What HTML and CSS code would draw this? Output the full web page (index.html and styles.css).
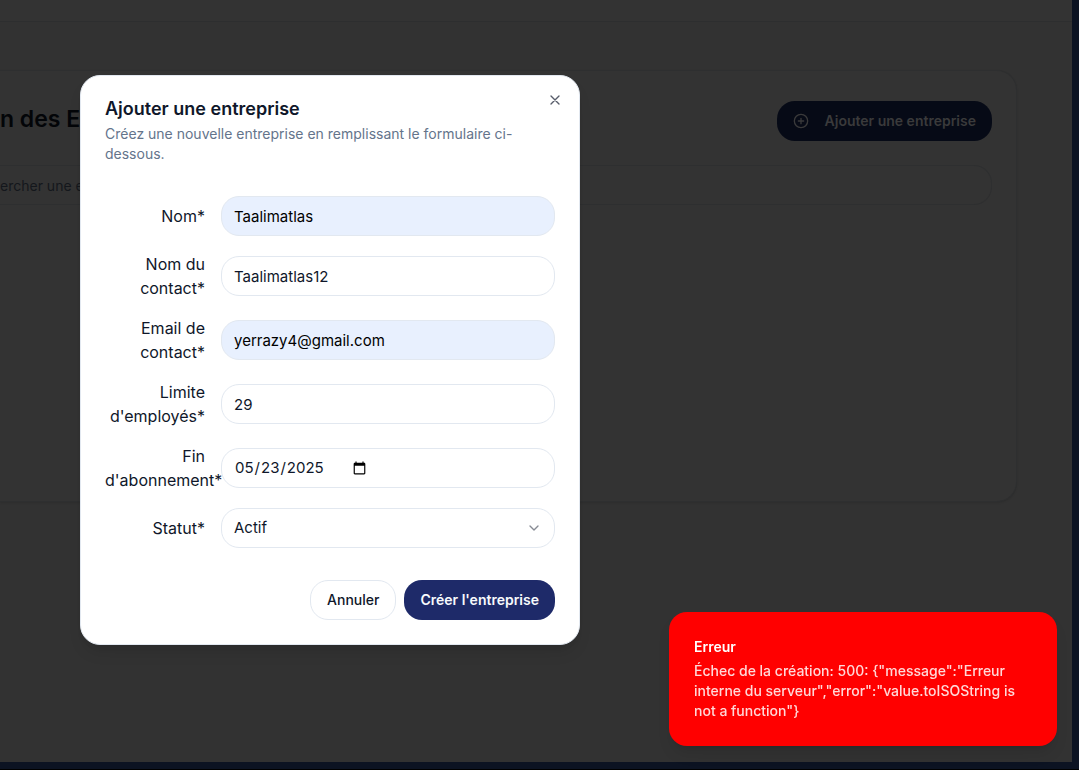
FILE: index.html
```html
<!DOCTYPE html>
<html lang="fr">
<head>
<meta charset="utf-8">
<meta name="viewport" content="width=device-width, initial-scale=1">
<title>Ajouter une entreprise</title>
<link rel="stylesheet" href="styles.css">
</head>
<body>
<div class="frame">
  <div class="app">
    <header class="topbar"></header>
    <main class="content">
      <section class="card">
        <div class="card-head">
          <h1 class="card-title">n des En</h1>
          <button class="btn btn-add" type="button">
            <svg class="icon" viewBox="0 0 24 24" aria-hidden="true"><circle cx="12" cy="12" r="10"/><path d="M8 12h8M12 8v8"/></svg>
            Ajouter une entreprise
          </button>
        </div>
        <input class="search" type="search" placeholder="ercher une en" aria-label="Rechercher">
      </section>
    </main>
  </div>
</div>

<div class="dialog" role="dialog" aria-labelledby="dialog-title">
  <button class="close" type="button" aria-label="Fermer">
    <svg class="icon" viewBox="0 0 24 24" aria-hidden="true"><path d="M18 6 6 18M6 6l12 12"/></svg>
  </button>
  <div class="dialog-head">
    <h2 class="dialog-title" id="dialog-title">Ajouter une entreprise</h2>
    <p class="dialog-text">Créez une nouvelle entreprise en remplissant le formulaire ci-dessous.</p>
  </div>
  <form class="form">
    <div class="fields">
      <div class="row"><label class="label" for="nom">Nom*</label><input class="field filled" id="nom" type="text" value="Taalimatlas"></div>
      <div class="row"><label class="label" for="contact">Nom du contact*</label><input class="field" id="contact" type="text" value="Taalimatlas12"></div>
      <div class="row"><label class="label" for="email">Email de contact*</label><input class="field filled" id="email" type="email" value="yerrazy4@gmail.com"></div>
      <div class="row"><label class="label" for="limite">Limite d'employés*</label><input class="field" id="limite" type="number" value="29"></div>
      <div class="row"><label class="label" for="fin">Fin d'abonnement*</label><input class="field" id="fin" type="date" value="2025-05-23"></div>
      <div class="row">
        <label class="label" for="statut">Statut*</label>
        <div class="select-wrap">
          <select class="field" id="statut"><option>Actif</option></select>
          <svg class="icon chevron" viewBox="0 0 24 24" aria-hidden="true"><path d="m6 9 6 6 6-6"/></svg>
        </div>
      </div>
    </div>
    <div class="actions">
      <button class="btn btn-outline" type="button">Annuler</button>
      <button class="btn btn-primary" type="button">Créer l'entreprise</button>
    </div>
  </form>
</div>

<div class="toast" role="alert">
  <div class="toast-title">Erreur</div>
  <div class="toast-text">Échec de la création: 500: {"message":"Erreur interne du serveur","error":"value.toISOString is not a function"}</div>
</div>
</body>
</html>
```

FILE: styles.css
```css
* { box-sizing: border-box; }

body {
  margin: 0;
  font-family: Inter, "Liberation Sans", sans-serif;
  font-size: 14px;
  line-height: 20px;
  color: #0f172a;
}

h1, h2, p { margin: 0; }

button, input, select { font: inherit; color: inherit; }

.icon {
  width: 16px;
  height: 16px;
  fill: none;
  stroke: currentColor;
  stroke-width: 2;
  stroke-linecap: round;
  stroke-linejoin: round;
}

/* Dimmed page behind the dialog */
.frame {
  display: flex;
  min-height: 100vh;
  padding: 0 7px 7px 0;
  overflow: hidden;
  background: #0c1322;
  border-bottom: 1px solid #000;
}

.app {
  flex: 1;
  display: flex;
  flex-direction: column;
  min-width: 0;
  background: #323232;
}

.topbar {
  height: 22px;
  background: #333;
  border-bottom: 1px solid #2d2e2f;
}

.content { padding: 48px 55px 0 0; }

.card {
  min-height: 432px;
  padding: 30px 24px 24px 0;
  background: #333;
  border: 1px solid #2e2f30;
  border-left: 0;
  border-radius: 0 20px 20px 0;
  box-shadow: 0 1px 2px rgba(0, 0, 0, 0.1);
}

.card-head {
  display: flex;
  align-items: flex-start;
  justify-content: space-between;
  margin-bottom: 24px;
}

.card-title {
  font-size: 23px;
  line-height: 36px;
  font-weight: 600;
  color: #030508;
}

.btn {
  display: flex;
  align-items: center;
  justify-content: center;
  height: 40px;
  padding: 0 16px;
  border: 0;
  border-radius: 18px;
  font-weight: 600;
  white-space: nowrap;
}

.btn-add {
  gap: 16px;
  background: #060a16;
  color: #3a3a3b;
}

.search {
  display: block;
  width: 100%;
  height: 40px;
  padding: 0;
  background: transparent;
  border: 1px solid #2e2f30;
  border-left: 0;
  border-radius: 0 18px 18px 0;
}

.search::placeholder { color: #14171c; }

/* Dialog */
.dialog {
  position: absolute;
  top: 75px;
  left: 80px;
  display: flex;
  flex-direction: column;
  gap: 16px;
  width: 500px;
  padding: 24px;
  background: #fff;
  border: 1px solid #e2e8f0;
  border-radius: 20px;
  box-shadow: 0 10px 15px -3px rgba(0, 0, 0, 0.1), 0 4px 6px -4px rgba(0, 0, 0, 0.1);
}

.close {
  position: absolute;
  top: 16px;
  right: 16px;
  display: flex;
  padding: 0;
  border: 0;
  background: none;
  color: #575d6a;
}

.dialog-head {
  display: flex;
  flex-direction: column;
  gap: 6px;
}

.dialog-title {
  font-size: 18px;
  line-height: 18px;
  font-weight: 600;
}

.dialog-text { color: #64748b; }

.form {
  display: flex;
  flex-direction: column;
  gap: 16px;
}

.fields {
  display: grid;
  gap: 16px;
  padding: 16px 0;
}

.row {
  display: grid;
  grid-template-columns: 100px minmax(0, 1fr);
  align-items: center;
  gap: 16px;
}

.label {
  font-size: 16px;
  line-height: 24px;
  text-align: right;
}

.field {
  display: flex;
  width: 100%;
  height: 40px;
  padding: 8px 12px;
  background: #fff;
  border: 1px solid #e2e8f0;
  border-radius: 18px;
  font-size: 15px;
  appearance: none;
}

.field[type="number"] { appearance: textfield; }

.filled {
  background: #e8f0fe;
  color: #000;
}

.select-wrap { position: relative; }

.chevron {
  position: absolute;
  top: 12px;
  right: 13px;
  color: #878b94;
  pointer-events: none;
}

.actions {
  display: flex;
  justify-content: flex-end;
  gap: 8px;
}

.btn-outline {
  background: #fff;
  border: 1px solid #e2e8f0;
  font-weight: 500;
}

.btn-primary {
  background: #1e2a69;
  color: #f8fafc;
}

/* Notification */
.toast {
  position: fixed;
  right: 22px;
  bottom: 24px;
  display: grid;
  gap: 4px;
  width: 388px;
  padding: 25px 33px 25px 25px;
  background: #f00;
  border-radius: 18px;
  color: #fff;
  box-shadow: 0 10px 15px -3px rgba(0, 0, 0, 0.1), 0 4px 6px -4px rgba(0, 0, 0, 0.1);
}

.toast-title { font-weight: 600; }

.toast-text {
  font-weight: 500;
  color: #ffd9d9;
}
```
